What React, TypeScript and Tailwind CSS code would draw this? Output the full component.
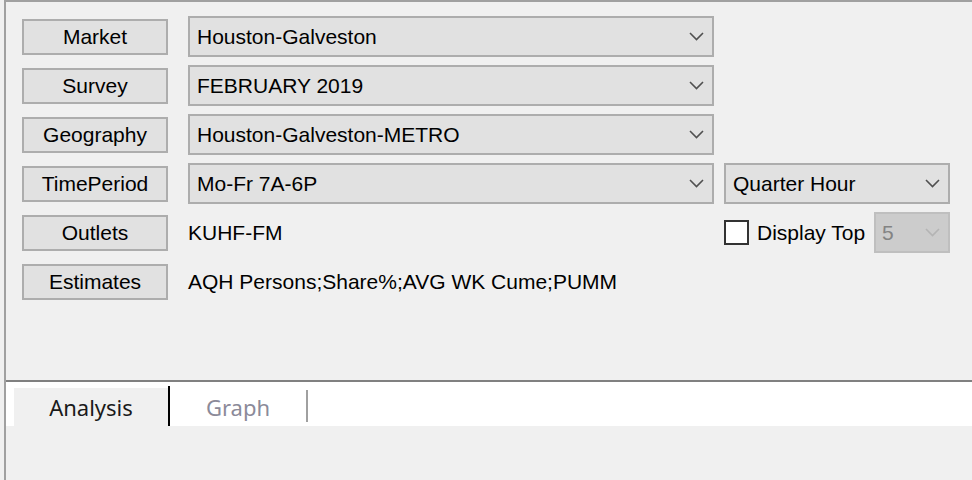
import type { ReactNode } from "react";

function Chevron({ disabled }: { disabled?: boolean }) {
  return (
    <svg width="15" height="9" viewBox="0 0 15 9" className="shrink-0">
      <polyline
        points="1,1 7.5,7.5 14,1"
        fill="none"
        stroke={disabled ? "#b4b4b4" : "#505050"}
        strokeWidth="1.6"
      />
    </svg>
  );
}

function FieldButton({ children }: { children: ReactNode }) {
  return (
    <div className="w-[146px] h-[36px] shrink-0 border-2 border-[#adadad] bg-[#e1e1e1] flex items-center justify-center text-black">
      {children}
    </div>
  );
}

function Combo({ value, width }: { value: string; width: string }) {
  return (
    <div
      className={`${width} h-full shrink-0 border-2 border-[#adadad] bg-[#e1e1e1] flex items-center justify-between pl-[7px] pr-[8px] text-black`}
    >
      <span>{value}</span>
      <Chevron />
    </div>
  );
}

export default function App() {
  return (
    <div className="w-[972px] h-[480px] overflow-hidden bg-[#f0f0f0] font-['Liberation_Sans',Arial,sans-serif] text-[21px] leading-none">
      <div className="ml-1 h-full border-l-2 border-t-2 border-[#a0a0a0] flex flex-col">
        <div className="h-[378px] shrink-0 pl-4 pt-[14px] flex flex-col gap-2">
          <div className="h-[41px] flex items-center">
            <FieldButton>Market</FieldButton>
            <div className="ml-5 h-full">
              <Combo value="Houston-Galveston" width="w-[526px]" />
            </div>
          </div>
          <div className="h-[41px] flex items-center">
            <FieldButton>Survey</FieldButton>
            <div className="ml-5 h-full">
              <Combo value="FEBRUARY 2019" width="w-[526px]" />
            </div>
          </div>
          <div className="h-[41px] flex items-center">
            <FieldButton>Geography</FieldButton>
            <div className="ml-5 h-full">
              <Combo value="Houston-Galveston-METRO" width="w-[526px]" />
            </div>
          </div>
          <div className="h-[41px] flex items-center">
            <FieldButton>TimePeriod</FieldButton>
            <div className="ml-5 h-full flex gap-[10px]">
              <Combo value="Mo-Fr 7A-6P" width="w-[526px]" />
              <Combo value="Quarter Hour" width="w-[226px]" />
            </div>
          </div>
          <div className="h-[41px] flex items-center">
            <FieldButton>Outlets</FieldButton>
            <div className="ml-5 w-[526px] shrink-0">KUHF-FM</div>
            <div className="ml-[10px] w-[226px] h-full flex items-center">
              <div className="w-[25px] h-[25px] border-2 border-[#333333] bg-white shrink-0" />
              <span className="ml-2">Display Top</span>
              <div className="ml-auto w-[76px] h-full border-2 border-[#bfbfbf] bg-[#cccccc] flex items-center justify-between pl-[6px] pr-[8px] text-[#838383]">
                <span>5</span>
                <Chevron disabled />
              </div>
            </div>
          </div>
          <div className="h-[41px] flex items-center">
            <FieldButton>Estimates</FieldButton>
            <div className="ml-5">AQH Persons;Share%;AVG WK Cume;PUMM</div>
          </div>
        </div>
        <div className="h-[2px] shrink-0 bg-[#808080]" />
        <div className="h-[44px] shrink-0 bg-white flex items-end pl-2 font-['Noto_Sans',sans-serif] text-[22px]">
          <div className="w-[154px] h-[38px] bg-[#f0f0f0] flex items-center justify-center text-[#1a1a1a]">
            Analysis
          </div>
          <div className="w-[2px] h-[40px] bg-black" />
          <div className="w-[136px] h-[38px] flex items-center justify-center text-[#8b8a99]">
            Graph
          </div>
          <div className="w-[2px] h-[32px] mb-[4px] bg-[#a0a0a0]" />
        </div>
        <div className="flex-1" />
      </div>
    </div>
  );
}
